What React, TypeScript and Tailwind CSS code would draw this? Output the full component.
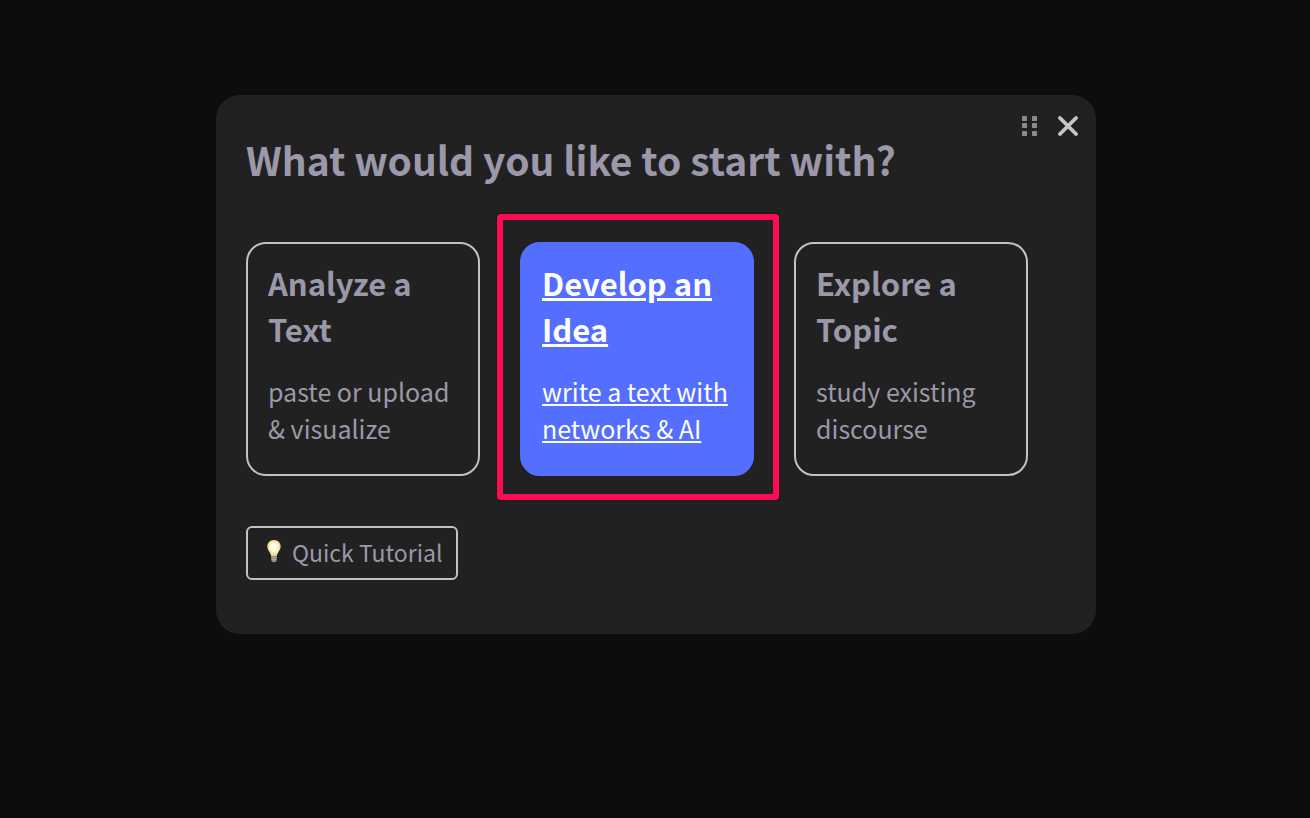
type StartOption = {
  id: string;
  title: string;
  description: string;
  highlighted?: boolean;
};

const options: StartOption[] = [
  { id: 'analyze', title: 'Analyze a Text', description: 'paste or upload & visualize' },
  { id: 'develop', title: 'Develop an Idea', description: 'write a text with networks & AI', highlighted: true },
  { id: 'explore', title: 'Explore a Topic', description: 'study existing discourse' },
];

function DragHandle() {
  return (
    <svg width="16" height="20" viewBox="0 0 16 20" fill="#8c8c8c" aria-hidden="true">
      {[0, 7, 15].map((y) => (
        <g key={y}>
          <rect x="0" y={y} width="5" height="5" rx="0.8" />
          <rect x="10" y={y} width="5" height="5" rx="0.8" />
        </g>
      ))}
    </svg>
  );
}

function CloseIcon() {
  return (
    <svg width="20" height="20" viewBox="0 0 20 20" fill="none" stroke="#c6c6c6" strokeWidth="3.8" strokeLinecap="round" aria-hidden="true">
      <path d="M2 2L18 18M18 2L2 18" />
    </svg>
  );
}

function BulbIcon() {
  return (
    <svg width="16" height="24" viewBox="-1 0 16 24" aria-hidden="true">
      <defs>
        <radialGradient id="bulb" cx="50%" cy="45%" r="58%">
          <stop offset="0" stopColor="#ffffff" />
          <stop offset="0.4" stopColor="#fffbe6" />
          <stop offset="1" stopColor="#eac650" />
        </radialGradient>
      </defs>
      <path d="M7 0C3.2 0 0.3 2.8 0.3 6.4C0.3 10.2 3.6 12.2 4.3 16.5H9.7C10.4 12.2 13.7 10.2 13.7 6.4C13.7 2.8 10.8 0 7 0Z" fill="url(#bulb)" />
      <path d="M4.3 16H9.7V20.2C9.7 21.2 8.4 22.2 7 22.2C5.6 22.2 4.3 21.2 4.3 20.2Z" fill="#8f8f89" />
      <path d="M4.3 17.4H9.7M4.3 19.4H9.7" stroke="#b5b4aa" strokeWidth="0.8" />
    </svg>
  );
}

function OptionCard({ option }: { option: StartOption }) {
  return (
    <div className="relative">
      <a
        href={`#${option.id}`}
        className={`block size-[234px] rounded-[20px] border-2 px-5 py-4 ${
          option.highlighted
            ? 'border-[#546eff] bg-[#546eff] text-white underline'
            : 'border-[#c2c2c2] text-[#9b98a9]'
        }`}
      >
        <h2 className="text-[31px] leading-[46px] font-bold">{option.title}</h2>
        <p className="mt-[21px] text-[25px] leading-[37px]">{option.description}</p>
      </a>
      {option.highlighted && (
        <div className="pointer-events-none absolute -top-7 -right-[25px] -bottom-6 -left-[23px] rounded-[4px] border-6 border-[#ff0a54] shadow-[0_0_3px_rgba(0,0,0,0.6)]" />
      )}
    </div>
  );
}

export default function App() {
  return (
    <div className="flex min-h-screen items-start justify-center bg-[#0d0d0d] pt-[95px] pl-0.5 font-['Noto_Sans_CJK_JP','Noto_Sans',sans-serif]">
      <div role="dialog" aria-labelledby="start-title" className="w-full max-w-[880px] rounded-3xl bg-[#212121] pb-[54px] text-[#9b98a9]">
        {/* Window controls */}
        <div className="flex items-center justify-end gap-5 pt-[21px] pr-[18px]">
          <button type="button" aria-label="Move">
            <DragHandle />
          </button>
          <button type="button" aria-label="Close">
            <CloseIcon />
          </button>
        </div>

        <div className="px-[30px]">
          <h1 id="start-title" className="text-[39px] leading-[46px] font-bold">
            What would you like to start with?
          </h1>

          <div className="mt-[60px] flex flex-wrap gap-10">
            {options.map((option) => (
              <OptionCard key={option.id} option={option} />
            ))}
          </div>

          <button
            type="button"
            className="mt-[50px] flex h-[54px] items-center gap-[10px] rounded-[6px] border-2 border-[#c2c2c2] pr-[14px] pb-0.5 pl-[18px] text-[23px]"
          >
            <BulbIcon />
            Quick Tutorial
          </button>
        </div>
      </div>
    </div>
  );
}
